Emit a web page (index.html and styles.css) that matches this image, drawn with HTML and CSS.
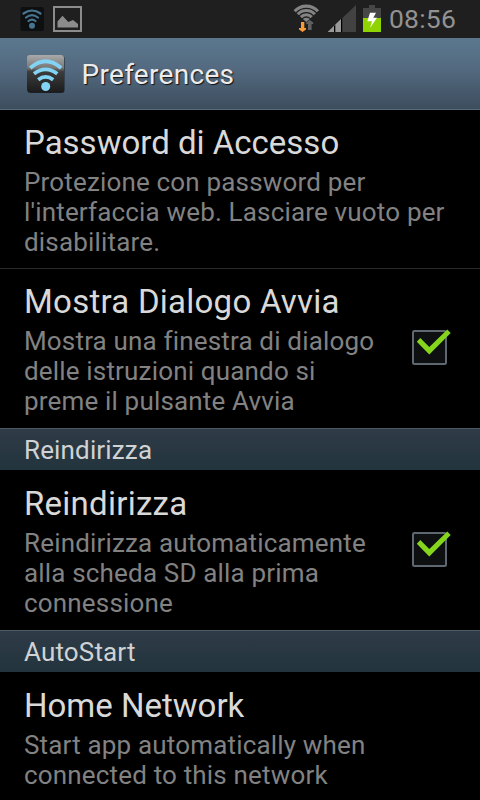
FILE: index.html
```html
<!DOCTYPE html>
<html lang="it">
<head>
<meta charset="utf-8">
<title>Preferences</title>
<link rel="stylesheet" href="styles.css">
</head>
<body>
<div class="status">
  <svg class="notifications" width="64" height="38" viewBox="20 0 64 38">
    <rect x="20.500" y="7" width="23.500" height="24" rx="2" fill="#0e0f10"/>
    <g fill="none" stroke="#477590" stroke-width="2.200" stroke-linecap="round">
      <path d="M23.500 13.500Q32 7.500 40.500 13.500M26 17.500Q32 12.800 38 17.500M28.500 21Q32 18.300 35.500 21"/>
    </g>
    <circle cx="32" cy="25.700" r="3" fill="#477590"/>
    <rect x="54" y="7" width="27" height="24" fill="none" stroke="#8c8c8c" stroke-width="2"/>
    <path d="M57.500 27.500V21.500L62.500 15.700L68.300 22L73 20L78 24V27.500Z" fill="#8c8c8c"/>
  </svg>
  <svg class="indicators" width="92" height="38" viewBox="292 0 92 38">
    <g fill="none" stroke="#848484" stroke-width="3.100">
      <path d="M294.700 11.300A15.600 15.600 0 0 1 317.900 11.300"/>
      <path d="M297.800 14.300A11.300 11.300 0 0 1 314.800 14.300"/>
      <path d="M300.900 17.100A7.300 7.300 0 0 1 311.700 17.100"/>
    </g>
    <path d="M302.800 18.900Q306.300 16.500 309.800 18.900L306.300 22Z" fill="#848484"/>
    <path d="M301 22h3.300v6h1.700v1.500L302.500 32L299 29.500V28h2Z" fill="#fa9a34"/>
    <path d="M308 30h3.600v-6h1.600v-1.500L309.700 20L306.300 22.500V24H308Z" fill="#606060"/>
    <path d="M327.700 32L356 5V32Z" fill="#424242"/>
    <path d="M327.700 32L341 19V32Z" fill="#989898"/>
    <path d="M334 26v6h1.300v-7.300zM341 19v13h1.200V18z" fill="#000"/>
    <path d="M363 8h6V5h6v3h6v10h-18z" fill="#464646"/>
    <path d="M363 18h18v14h-18z" fill="#8fd400"/>
    <path d="M370 12.700H376L373.300 17.700H377L370 28L372 21.300H367.300Z" fill="#fff"/>
  </svg>
  <span class="clock">08:56</span>
</div>
<header class="bar">
  <svg class="app-icon" width="38" height="40" viewBox="27 54 38 40">
    <defs>
      <linearGradient id="tile" x1="0" y1="0" x2="0" y2="1">
        <stop offset="0" stop-color="#aaa"/><stop offset=".35" stop-color="#777"/>
        <stop offset=".45" stop-color="#3c3c3c"/><stop offset="1" stop-color="#1c1c1c"/>
      </linearGradient>
    </defs>
    <rect x="27.500" y="55.500" width="37" height="37.500" rx="3" fill="#1b2027"/>
    <rect x="27" y="55" width="37" height="37" rx="3" fill="url(#tile)"/>
    <g fill="none" stroke="#83d4f4" stroke-width="3.800">
      <path d="M30.200 68Q45.600 54.500 61.200 68M34 73.800Q45.600 65 57.300 73.800M38.200 79.800Q45.600 74 53.200 79.800"/>
    </g>
    <circle cx="45.700" cy="86.500" r="4.500" fill="#83d4f4"/>
  </svg>
  <h1>Preferences</h1>
</header>
<main>
  <section class="row divided">
    <div class="text">
      <h2>Password di Accesso</h2>
      <p>Protezione con password per<br>l'interfaccia web. Lasciare vuoto per<br>disabilitare.</p>
    </div>
  </section>
  <section class="row">
    <div class="text">
      <h2 class="wide">Mostra Dialogo Avvia</h2>
      <p>Mostra una finestra di dialogo<br>delle istruzioni quando si<br>preme il pulsante Avvia</p>
    </div>
    <svg class="check" width="40" height="38" viewBox="0 0 40 38">
      <rect x="1" y="3" width="33" height="33" rx="1.500" fill="#0d0f11" stroke="#5f6870" stroke-width="2"/>
      <path d="M4.800 13.700L8.300 10L17.300 19L35.300 1.600L38.700 5L17.300 26.500Z" fill="#85d51c"/>
    </svg>
  </section>
  <h3>Reindirizza</h3>
  <section class="row spaced">
    <div class="text">
      <h2 class="wide">Reindirizza</h2>
      <p>Reindirizza automaticamente<br>alla scheda SD alla prima<br>connessione</p>
    </div>
    <svg class="check" width="40" height="38" viewBox="0 0 40 38">
      <rect x="1" y="3" width="33" height="33" rx="1.500" fill="#0d0f11" stroke="#5f6870" stroke-width="2"/>
      <path d="M4.800 13.700L8.300 10L17.300 19L35.300 1.600L38.700 5L17.300 26.500Z" fill="#85d51c"/>
    </svg>
  </section>
  <h3>AutoStart</h3>
  <section class="row spaced">
    <div class="text">
      <h2>Home Network</h2>
      <p>Start app automatically when<br>connected to this network</p>
    </div>
  </section>
</main>
</body>
</html>
```

FILE: styles.css
```css
* { box-sizing: border-box; }
body {
  margin: 0;
  width: 480px;
  height: 800px;
  overflow: hidden;
  background: #000;
  color: #d9d9d9;
  font-family: Roboto, sans-serif;
}
svg { display: block; flex: none; }
h1, h2, h3, p { margin: 0; font-weight: 400; white-space: nowrap; }
.status {
  display: flex;
  height: 38px;
  padding: 0 23px 0 20px;
  background: #1f1f1f;
}
.indicators { margin-left: auto; }
.clock {
  width: 68px;
  margin-left: 5px;
  font-size: 26.5px;
  line-height: 38px;
  letter-spacing: .2px;
  color: #929292;
}
.bar {
  display: flex;
  align-items: center;
  height: 72px;
  padding-left: 27px;
  background: linear-gradient(#5b788f, #53697f 45%, #3c4d5d);
  border-bottom: 1px solid #596b7a;
}
h1 {
  margin-left: 16.5px;
  padding-top: 2px;
  font-size: 28px;
  line-height: 34px;
  letter-spacing: .3px;
  color: #ececec;
  text-shadow: 1px 1px 1px #111;
}
.row {
  display: flex;
  align-items: center;
  height: 159px;
  padding: 0 28px 0 24px;
}
.text { align-self: flex-start; flex: 1; padding-top: 13px; }
.divided { border-bottom: 1px solid #292929; }
.spaced { height: 160px; }
.spaced .text { padding-top: 14px; }
.check { margin-bottom: 3px; }
.spaced .check { margin-bottom: 2px; }
h2 { font-size: 33px; line-height: 39px; }
.wide { letter-spacing: .25px; }
p {
  margin-top: 5px;
  font-size: 26px;
  line-height: 30px;
  letter-spacing: .17px;
  color: #828282;
}
h3 {
  height: 42px;
  padding-left: 24px;
  border-top: 1px solid #4b5963;
  background: linear-gradient(#2f3b47, #22343d);
  font-size: 26px;
  line-height: 42px;
  letter-spacing: .15px;
  color: #d0d2d3;
}
```
